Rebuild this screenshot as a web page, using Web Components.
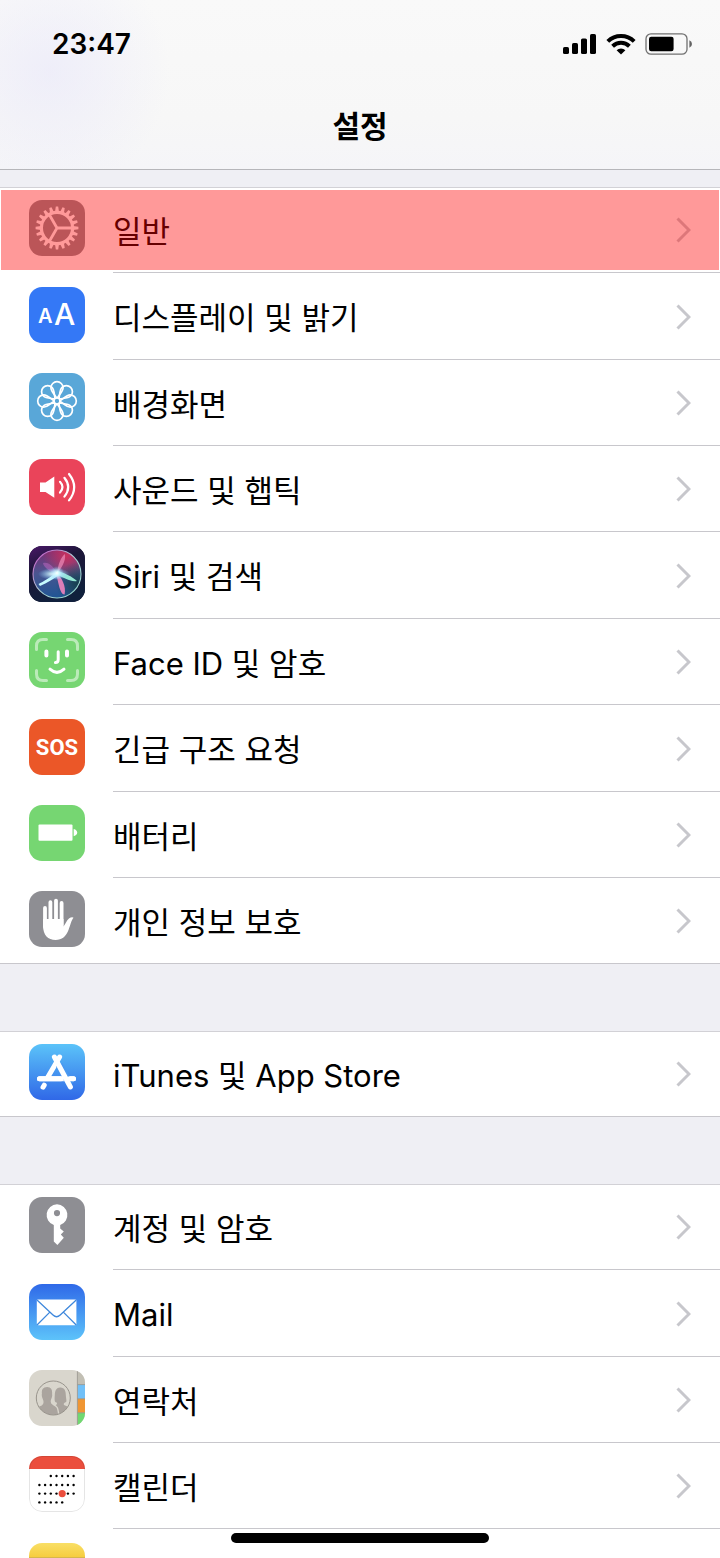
<!DOCTYPE html>
<html lang="ko">
<head>
<meta charset="utf-8">
<meta name="viewport" content="width=device-width, initial-scale=1">
<title>설정</title>
<style>
  body {
    margin: 0;
    background: #efeff4;
    color: #000;
    font-family: Inter, "Noto Sans CJK KR", sans-serif;
  }
</style>
</head>
<body>
<settings-screen>
  <status-bar slot="header">23:47</status-bar>
  <nav-bar slot="header">설정</nav-bar>

  <settings-group>
    <settings-row icon="general" highlighted>일반</settings-row>
    <settings-row icon="display">디스플레이 및 밝기</settings-row>
    <settings-row icon="wallpaper">배경화면</settings-row>
    <settings-row icon="sound">사운드 및 햅틱</settings-row>
    <settings-row icon="siri">Siri 및 검색</settings-row>
    <settings-row icon="faceid">Face ID 및 암호</settings-row>
    <settings-row icon="sos">긴급 구조 요청</settings-row>
    <settings-row icon="battery">배터리</settings-row>
    <settings-row icon="privacy">개인 정보 보호</settings-row>
  </settings-group>

  <settings-group>
    <settings-row icon="appstore">iTunes 및 App Store</settings-row>
  </settings-group>

  <settings-group>
    <settings-row icon="key">계정 및 암호</settings-row>
    <settings-row icon="mail">Mail</settings-row>
    <settings-row icon="contacts">연락처</settings-row>
    <settings-row icon="calendar">캘린더</settings-row>
    <settings-row icon="notes"></settings-row>
  </settings-group>
</settings-screen>

<script>
const define = (name, html, setup) => {
  const template = document.createElement('template');
  template.innerHTML = html;
  customElements.define(name, class extends HTMLElement {
    constructor() {
      super();
      this.attachShadow({ mode: 'open' }).append(template.content.cloneNode(true));
    }
    connectedCallback() { if (setup) setup(this, this.shadowRoot); }
  });
};

/* ---- icon artwork, on a 56 x 56 canvas ---- */
const around = (count, fn) => Array.from({ length: count }, (_, i) => fn(i * 360 / count)).join('');

const dots = () => {
  const xs = [10.4, 16.1, 21.8, 27.5, 33.2, 38.9, 44.6];
  const rows = [[20, 2, 6], [29, 0, 6], [37.6, 0, 6], [46.4, 0, 4]];
  return rows.map(([y, a, b]) => xs.slice(a, b + 1).map(x => `<circle cx="${x}" cy="${y}" r="1.2"/>`).join('')).join('');
};

const ART = {
  general: ['#8e8e93', `
    <g fill="none" stroke="#fff" stroke-width="3.2">
      <circle cx="28" cy="28" r="15.6"/>
      <path stroke-width="2.8" d="M28 28H43M28 28L20.5 15M28 28L20.5 41"/>
    </g>
    <g fill="#fff">${around(20, a => `<path transform="rotate(${a} 28 28)" d="M26 12 26.8 6.6H29.2L30 12Z"/>`)}</g>`],
  display: ['#3478f6', `
    <g fill="#fff" font-family="Inter, sans-serif">
      <text x="9" y="36" font-size="20" font-weight="600">A</text>
      <text x="25" y="38" font-size="30" font-weight="500">A</text>
    </g>`],
  wallpaper: ['#59a7d8', `
    <g fill="none" stroke="#fff" stroke-width="1.7">
      ${around(8, a => `<path transform="rotate(${a} 28 28)" d="M28 25.4C25.6 21.6 21.9 18.4 21.9 14.8A6.1 6.1 0 0 1 34.1 14.8C34.1 18.4 30.4 21.6 28 25.4Z"/>`)}
      <circle cx="28" cy="28" r="3" fill="#59a7d8"/>
    </g>`],
  sound: ['#ea445a', `
    <path fill="#fff" d="M11 23.5H16.5L25.3 17.6V38.8L16.5 33H11Z"/>
    <g fill="none" stroke="#fff" stroke-width="2.2" stroke-linecap="round">
      <path d="M31 22.8Q36 28.2 31 33.6M35.4 18.8Q43 28.2 35.4 37.6M40 15Q50.4 28.2 40 41.4"/>
    </g>`],
  siri: ['#15152f', `
    <defs>
      <linearGradient id="bg" x1="0" y1="0" x2=".4" y2="1"><stop offset="0" stop-color="#4b1769"/><stop offset=".4" stop-color="#1c1638"/><stop offset="1" stop-color="#10203c"/></linearGradient>
      <linearGradient id="orb" x1=".4" y1="0" x2=".5" y2="1"><stop offset="0" stop-color="#7a2d74"/><stop offset=".45" stop-color="#4a5590"/><stop offset="1" stop-color="#1f5594"/></linearGradient>
      <radialGradient id="red" cx=".7" cy=".12" r=".5"><stop offset="0" stop-color="#c8305e"/><stop offset="1" stop-color="#c8305e" stop-opacity="0"/></radialGradient>
      <radialGradient id="teal" cx=".92" cy=".7" r=".45"><stop offset="0" stop-color="#16404f"/><stop offset="1" stop-color="#16404f" stop-opacity="0"/></radialGradient>
      <radialGradient id="glow"><stop offset="0" stop-color="#fff"/><stop offset=".3" stop-color="#d5faff" stop-opacity=".75"/><stop offset="1" stop-color="#82ccff" stop-opacity="0"/></radialGradient>
      <linearGradient id="rim" x1="0" y1="0" x2="1" y2="1"><stop offset="0" stop-color="#c84ac5"/><stop offset=".5" stop-color="#a8cbd1"/><stop offset="1" stop-color="#8fd6c9"/></linearGradient>
    </defs>
    <rect width="56" height="56" fill="url(#bg)"/>
    <circle cx="28" cy="28" r="24" fill="url(#orb)"/>
    <circle cx="28" cy="28" r="24" fill="url(#red)"/>
    <circle cx="28" cy="28" r="24" fill="url(#teal)"/>
    <path fill="#c06ac5" opacity=".5" d="M28 28C20 26 14 20 14 17C20 15 26 22 28 28Z"/>
    <path fill="#f08bb9" opacity=".7" d="M28 28C29 18 32 11 36 8C37 16 32 22 28 28Z"/>
    <path fill="#ef83be" opacity=".9" d="M27 27C33 31 37.5 41 35.6 48.5C31 49 29.5 37 27 27Z"/>
    <path fill="#9ef8df" opacity=".9" d="M28 25C34 26 44 31 48 35C42 36.4 34 31 28 29Z"/>
    <path fill="#c6fbff" d="M29 25C22 31 14 36 9.5 38L11 40C18 37 26 32 30 29Z"/>
    <ellipse cx="25" cy="28" rx="16" ry="6" fill="url(#glow)"/>
    <circle cx="28" cy="27" r="7" fill="url(#glow)"/>
    <circle cx="28" cy="28" r="24" fill="none" stroke="url(#rim)" stroke-width="1.1"/>`],
  faceid: ['#76d672', `
    <g fill="none" stroke="#fff" stroke-linecap="round">
      <path opacity=".5" stroke-width="3" d="M7.5 17.5V14Q7.5 7.5 14 7.5H17.5M38.5 7.5H42Q48.5 7.5 48.5 14V17.5M48.5 38.5V42Q48.5 48.5 42 48.5H38.5M17.5 48.5H14Q7.5 48.5 7.5 42V38.5"/>
      <path stroke-width="4" d="M17.4 19.4V23.4M38 19.4V23.4"/>
      <path stroke-width="3" d="M29.2 19.8V27.5Q29.2 30.5 26.4 30.5M21 37.2Q28 43.6 35 37.2"/>
    </g>`],
  sos: ['#eb5728', `
    <text x="28" y="36" text-anchor="middle" fill="#fff" font-family="Roboto, sans-serif" font-weight="700" font-size="22">SOS</text>`],
  battery: ['#76d672', `
    <rect x="9.5" y="19.4" width="34" height="16.4" rx="1" fill="#fff"/>
    <path fill="#fff" d="M44.7 24Q48.2 25 48.2 27.6Q48.2 30.4 44.7 31.2Z"/>`],
  privacy: ['#8e8e93', `
    <g stroke="#fff" stroke-width="3.8" stroke-linecap="round">
      <path d="M16 17V36M21.4 11.2V34M27 9.6V34M32.6 12V34"/>
    </g>
    <path fill="#fff" d="M14.1 28H34.5V35.5C36.5 33 37.4 29.6 40 27.4C41.6 26.2 44 25.8 44.5 26.8C42.4 29 41.5 34 39.5 39C37 45.5 33 49 26.6 49C19 49 14.1 44 14.1 35Z"/>`],
  appstore: ['linear-gradient(#5bc3f9,#3068e7)', `
    <g fill="none" stroke-linecap="round">
      <path stroke="#fff" stroke-width="5" d="M10.5 34.8H44.5M30.6 13L18.6 33.6M15.2 41.2L14 43.2"/>
      <path stroke="#4a98f1" stroke-width="7" stroke-linecap="butt" d="M30.2 20.8L41 40.5"/>
      <path stroke="#fff" stroke-width="5" d="M25.4 13L41.4 43M10.5 34.8H32M40.5 34.8H44.5"/>
    </g>`],
  key: ['#8e8e93', `
    <path fill="#fff" fill-rule="evenodd" d="M28 7.2A10.7 10.7 0 0 1 31.2 28V31.4L34.8 34.4L31.8 37.6L34.8 40.8L31.5 44.6L28.4 48L24.8 44.4V28A10.7 10.7 0 0 1 28 7.2ZM28 13A3.1 3.1 0 1 0 28 19.2A3.1 3.1 0 1 0 28 13Z"/>`],
  mail: ['linear-gradient(#2f69e8,#5dc3fa)', `
    <rect x="7.8" y="15.6" width="39.6" height="25.6" rx="1" fill="#fff"/>
    <path fill="none" stroke="#3f88dc" stroke-width="1.3" d="M8 16L24 31Q27.6 34.4 31.2 31L47.2 16M8 41L20.6 28.4M47.2 41L34.6 28.4"/>`],
  contacts: ['#d9d6cd', `
    <rect x="48.5" width="7.5" height="14.6" fill="#c2bfb4"/>
    <rect x="48.5" y="14.6" width="7.5" height="14.2" fill="#71c0f8"/>
    <rect x="48.5" y="28.8" width="7.5" height="14" fill="#f09633"/>
    <rect x="48.5" y="42.8" width="7.5" height="14" fill="#70d870"/>
    <path stroke="#96938b" stroke-width=".8" d="M48.4 0V56M48.5 14.6H56M48.5 28.8H56M48.5 42.8H56"/>
    <clipPath id="disc"><circle cx="24.3" cy="28" r="16.8"/></clipPath>
    <g clip-path="url(#disc)">
      <path fill="#aaa49e" d="M31 17.5C35.5 17.2 36.8 21 36.8 25C37 29 38 31 37 32C35 33 34.4 33.6 35 35C40 37 42 38 42 47H26L25 36C27.6 35 28.6 33.8 27.6 32.6C25 32 25.6 29 25.8 25C26 20 27.6 17.7 31 17.5Z"/>
      <path fill="#aaa49e" stroke="#d9d6cd" stroke-width="1.4" d="M18 16.2C22.6 16 24.2 19.4 23.8 24C24.4 26.6 23.4 27.6 22.8 29.4C22 31.8 22.4 33.4 24 34.2C28 36.2 29 36.6 30 47H4C5 37 8 36.8 12.4 34.8C14 33.8 14.2 31.8 13.2 29.4C12.4 27.6 11.6 26.4 12.2 23.6C11.6 19 13.6 16.4 18 16.2Z"/>
    </g>
    <circle cx="24.3" cy="28" r="17" fill="none" stroke="#918c85" stroke-width=".9"/>`],
  calendar: ['#fff', `
    <rect width="56" height="13" fill="#eb4e3d"/>
    ${dots()}
    <circle cx="33.2" cy="37.6" r="3.6" fill="#eb4e3d"/>
    <rect x=".5" y=".5" width="55" height="55" rx="12.5" fill="none" stroke="#000" stroke-opacity=".1"/>`],
  notes: ['#fff', `
    <defs><linearGradient id="pad" x1="0" y1="0" x2="0" y2="1"><stop offset="0" stop-color="#f9df66"/><stop offset="1" stop-color="#f6cc3c"/></linearGradient></defs>
    <rect width="56" height="15" fill="url(#pad)"/>
    <path stroke="#b8a05a" d="M0 15H56"/>`],
};

define('settings-icon', `
  <style>
    :host { display: block; width: 56px; height: 56px; border-radius: 13px; overflow: hidden; }
    svg { display: block; width: 100%; height: 100%; }
  </style>
  <svg viewBox="0 0 56 56" aria-hidden="true"></svg>`,
  (host, root) => {
    const entry = ART[host.getAttribute('name')];
    if (!entry) return;
    host.style.background = entry[0];
    root.querySelector('svg').innerHTML = entry[1];
  });

define('settings-row', `
  <style>
    :host { display: block; position: relative; }
    a {
      box-sizing: border-box; height: 100%;
      display: flex; align-items: center; gap: 28px;
      padding: 0 29px;
      color: inherit; text-decoration: none;
      font-size: 31px; line-height: 40px;
    }
    settings-icon { margin-bottom: 4px; flex: none; }
    span { flex: 1; white-space: nowrap; padding-top: 3px; }
    .chevron { flex: none; width: 15px; height: 26px; }
    :host::after {
      content: ""; position: absolute; left: 113px; right: 0; bottom: 0;
      height: 1px; background: #c8c7cc;
    }
    :host(:last-child)::after { left: 0; }
    :host([highlighted])::before {
      content: ""; position: absolute; inset: 3px 1px;
      background: rgba(255, 0, 0, .4); pointer-events: none;
    }
  </style>
  <a>
    <span><slot></slot></span>
    <svg class="chevron" viewBox="0 0 15 26" aria-hidden="true">
      <path d="M1.5 1.5 13 13 1.5 24.5" fill="none" stroke="#c7c7cc" stroke-width="3"/>
    </svg>
  </a>`,
  (host, root) => {
    const name = host.getAttribute('icon');
    const link = root.querySelector('a');
    const icon = document.createElement('settings-icon');
    icon.setAttribute('name', name);
    link.prepend(icon);
    link.href = '#' + name;
    if (name === 'notes') link.setAttribute('aria-label', '메모');
  });

define('settings-group', `
  <style>
    :host {
      display: grid; position: relative; background: #fff;
      grid-auto-rows: 86px 87px 86px 86px 87px;
    }
    :host::before {
      content: ""; position: absolute; left: 0; right: 0; top: 0;
      height: 1px; background: #d2d1d6;
    }
  </style>
  <slot></slot>`);

define('status-bar', `
  <style>
    :host {
      display: flex; align-items: center; height: 88px;
      padding: 0 27px 0 52px;
      font-size: 28px; line-height: 34px; font-weight: 600;
    }
    span { flex: 1; }
    svg { display: block; }
    .icons { display: flex; align-items: center; gap: 9px; }
  </style>
  <span><slot></slot></span>
  <div class="icons">
    <svg width="34" height="22" viewBox="0 0 34 22" role="img" aria-label="신호">
      <rect x="0" y="14" width="6" height="7" rx="1.6"/>
      <rect x="9" y="10" width="6" height="11" rx="1.6"/>
      <rect x="18" y="5.4" width="6" height="15.6" rx="1.6"/>
      <rect x="27" y="1" width="6" height="20" rx="1.6"/>
    </svg>
    <svg width="30" height="22" viewBox="0 0 30 22" role="img" aria-label="Wi-Fi">
      <g fill="none" stroke="#000" stroke-width="4">
        <path d="M1.8 8.4A19 19 0 0 1 28.2 8.4M6.6 13.2A12.2 12.2 0 0 1 23.4 13.2"/>
      </g>
      <path d="M10.6 17.2A6.6 6.6 0 0 1 19.4 17.2L15 21.6Z"/>
    </svg>
    <svg width="48" height="22" viewBox="0 0 48 22" role="img" aria-label="배터리">
      <rect x="1" y=".8" width="41" height="20.4" rx="5" fill="none" stroke="#000" stroke-opacity=".55" stroke-width="1.3"/>
      <rect x="4" y="3.8" width="24.6" height="14.4" rx="2.2"/>
      <path fill-opacity=".6" d="M44.4 7.2Q47 8.4 47 11Q47 13.6 44.4 14.8Z"/>
    </svg>
  </div>`);

define('nav-bar', `
  <style>
    :host { display: flex; justify-content: center; align-items: center; height: 75px; padding-bottom: 6px; }
    h1 { margin: 0; font-size: 30px; line-height: 40px; font-weight: 700; }
  </style>
  <h1><slot></slot></h1>`);

define('settings-screen', `
  <style>
    :host { display: flex; flex-direction: column; height: 100vh; overflow: hidden; }
    header {
      flex: none; border-bottom: 1px solid #b6b6ba;
      background:
        radial-gradient(circle at 50px 72px, rgba(232, 231, 250, .6), rgba(244, 244, 248, 0) 120px),
        linear-gradient(#f9f9f9, #f7f7f7 70%, #f5f5f8);
    }
    main {
      flex: 1; min-height: 0; overflow-y: auto; scrollbar-width: none;
      display: flex; flex-direction: column; gap: 67px;
      padding-top: 17px;
    }
    .home {
      position: fixed; left: 0; right: 0; bottom: 15px;
      width: 258px; height: 10px; margin: 0 auto;
      border-radius: 5px; background: #000; pointer-events: none;
    }
  </style>
  <header><slot name="header"></slot></header>
  <main><slot></slot></main>
  <div class="home"></div>`);
</script>
</body>
</html>
